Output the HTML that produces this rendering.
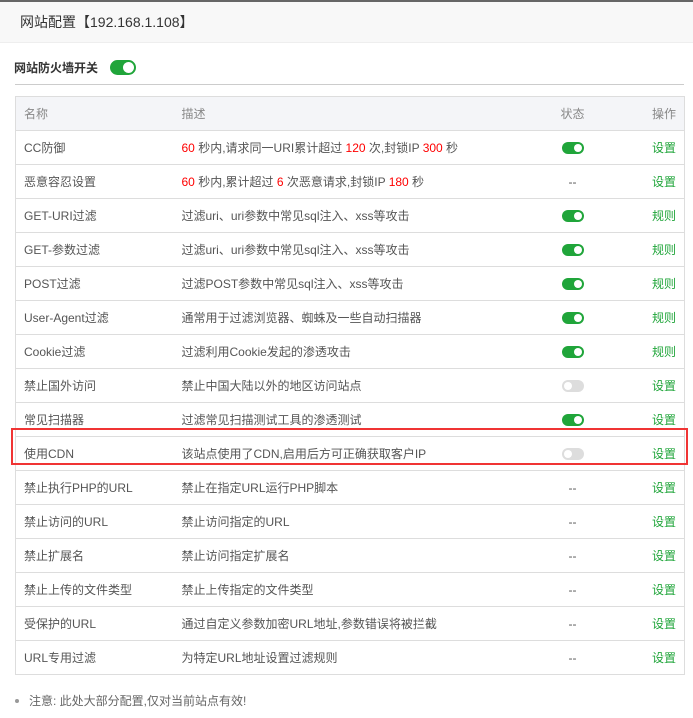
<!DOCTYPE html>
<html><head><meta charset="utf-8"><style>
*{margin:0;padding:0;box-sizing:border-box}
body{width:693px;height:718px;overflow:hidden;background:#fff;font-family:"Liberation Sans","Noto Sans CJK SC",sans-serif;font-size:12px;color:#555;position:relative}
.top{position:absolute;left:0;top:0;width:693px;height:2px;background:#666}
.hd{position:absolute;left:0;top:2px;width:693px;height:41px;background:#f8f8f8;border-bottom:1px solid #eee;font-size:14px;color:#333;line-height:41px;padding-left:20px}
.sw{position:absolute;left:14px;top:59px;font-size:12px;color:#333;font-weight:bold;line-height:18px}
.big{position:absolute;left:110px;top:60px;width:26px;height:15px;border-radius:8px;background:#20a53a}
.big:after{content:"";position:absolute;right:2px;top:2px;width:11px;height:11px;border-radius:50%;background:#fff}
.hr{position:absolute;left:15px;top:84px;width:669px;height:1px;background:#ccc}
table{position:absolute;left:15px;top:96px;width:670px;border-collapse:collapse;border:1px solid #ddd}
td,th{height:34px;border-top:1px solid #ddd;font-weight:normal;text-align:left;padding:0;white-space:nowrap}
th{background:#f4f5f8;color:#888}
td.n,th.n{padding-left:8px;width:166px}
td.s,th.s{text-align:center;width:84px}
td.a,th.a{text-align:right;padding-right:8px;width:70px}
td.a{color:#20a53a}
.r{color:#f00}
.t{display:inline-block;width:22px;height:12px;border-radius:6px;background:#20a53a;position:relative;vertical-align:middle}
.t:after{content:"";position:absolute;right:2px;top:2px;width:8px;height:8px;border-radius:50%;background:#fff}
.t.off{background:#ddd}
.t.off:after{left:2px;right:auto}
.box{position:absolute;left:11px;top:428px;width:677px;height:37px;border:2px solid #f03434}
.note{position:absolute;left:15px;top:693px;color:#666;line-height:16px}
.note b{display:inline-block;width:4px;height:4px;border-radius:50%;background:#999;margin:0 10px 2px 0;vertical-align:middle}
</style></head><body>
<div class="top"></div>
<div class="hd">网站配置【192.168.1.108】</div>
<div class="sw">网站防火墙开关</div><div class="big"></div>
<div class="hr"></div>
<table>
<tr><th class="n">名称</th><th>描述</th><th class="s">状态</th><th class="a">操作</th></tr>
<tr><td class="n">CC防御</td><td><span class="r">60</span> 秒内,请求同一URI累计超过 <span class="r">120</span> 次,封锁IP <span class="r">300</span> 秒</td><td class="s"><span class="t"></span></td><td class="a">设置</td></tr>
<tr><td class="n">恶意容忍设置</td><td><span class="r">60</span> 秒内,累计超过 <span class="r">6</span> 次恶意请求,封锁IP <span class="r">180</span> 秒</td><td class="s">--</td><td class="a">设置</td></tr>
<tr><td class="n">GET-URI过滤</td><td>过滤uri、uri参数中常见sql注入、xss等攻击</td><td class="s"><span class="t"></span></td><td class="a">规则</td></tr>
<tr><td class="n">GET-参数过滤</td><td>过滤uri、uri参数中常见sql注入、xss等攻击</td><td class="s"><span class="t"></span></td><td class="a">规则</td></tr>
<tr><td class="n">POST过滤</td><td>过滤POST参数中常见sql注入、xss等攻击</td><td class="s"><span class="t"></span></td><td class="a">规则</td></tr>
<tr><td class="n">User-Agent过滤</td><td>通常用于过滤浏览器、蜘蛛及一些自动扫描器</td><td class="s"><span class="t"></span></td><td class="a">规则</td></tr>
<tr><td class="n">Cookie过滤</td><td>过滤利用Cookie发起的渗透攻击</td><td class="s"><span class="t"></span></td><td class="a">规则</td></tr>
<tr><td class="n">禁止国外访问</td><td>禁止中国大陆以外的地区访问站点</td><td class="s"><span class="t off"></span></td><td class="a">设置</td></tr>
<tr><td class="n">常见扫描器</td><td>过滤常见扫描测试工具的渗透测试</td><td class="s"><span class="t"></span></td><td class="a">设置</td></tr>
<tr><td class="n">使用CDN</td><td>该站点使用了CDN,启用后方可正确获取客户IP</td><td class="s"><span class="t off"></span></td><td class="a">设置</td></tr>
<tr><td class="n">禁止执行PHP的URL</td><td>禁止在指定URL运行PHP脚本</td><td class="s">--</td><td class="a">设置</td></tr>
<tr><td class="n">禁止访问的URL</td><td>禁止访问指定的URL</td><td class="s">--</td><td class="a">设置</td></tr>
<tr><td class="n">禁止扩展名</td><td>禁止访问指定扩展名</td><td class="s">--</td><td class="a">设置</td></tr>
<tr><td class="n">禁止上传的文件类型</td><td>禁止上传指定的文件类型</td><td class="s">--</td><td class="a">设置</td></tr>
<tr><td class="n">受保护的URL</td><td>通过自定义参数加密URL地址,参数错误将被拦截</td><td class="s">--</td><td class="a">设置</td></tr>
<tr><td class="n">URL专用过滤</td><td>为特定URL地址设置过滤规则</td><td class="s">--</td><td class="a">设置</td></tr>
</table>
<div class="box"></div>
<div class="note"><b></b>注意: 此处大部分配置,仅对当前站点有效!</div>
</body></html>
